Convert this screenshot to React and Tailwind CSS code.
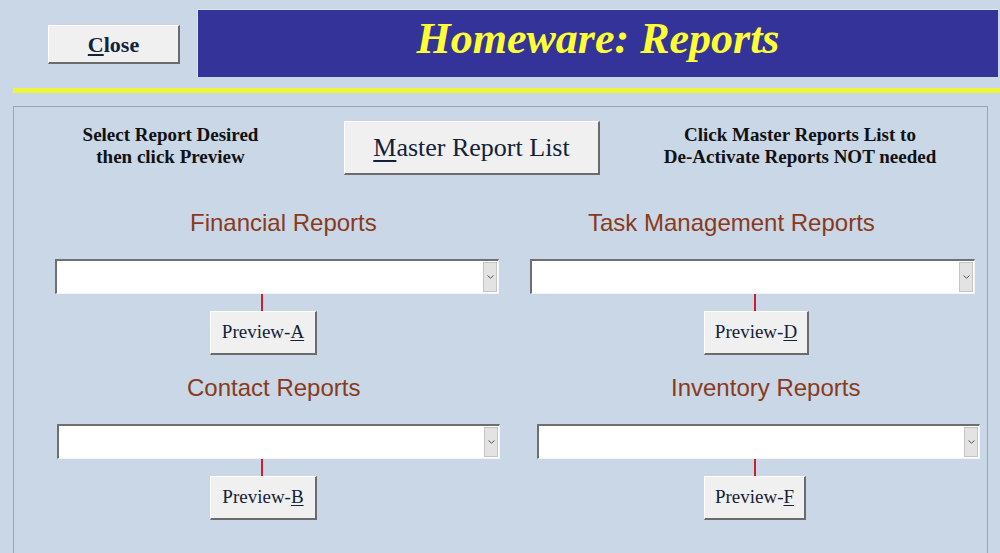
import React from 'react';

const serif = { fontFamily: '"Liberation Serif", "Times New Roman", serif' };
const sans = { fontFamily: '"Liberation Sans", Arial, sans-serif' };

function ComboBox({ left, width }) {
    return (
        <div
            className="h-[35px] flex bg-white border-t-2 border-l-2 border-t-[#6f6f6f] border-l-[#6f6f6f] border-b border-r border-b-[#f4f4f4] border-r-[#f4f4f4]"
            style={{ marginLeft: left, width }}
        >
            <div className="flex-1" />
            <div className="w-[14px] my-[1px] mr-[1px] bg-[#e3e3e3] border border-[#c4c4c4] flex items-center justify-center">
                <svg width="7" height="4" viewBox="0 0 7 4">
                    <path d="M0.5 0.5 L3.5 3.2 L6.5 0.5" fill="none" stroke="#555" strokeWidth="1" />
                </svg>
            </div>
        </div>
    );
}

function WinButton({ children, className = '' }) {
    return (
        <button
            className={`bg-[#f0f0f0] border-t border-l border-t-white border-l-white border-b-2 border-r-2 border-b-[#6b6b6b] border-r-[#6b6b6b] text-[#14213a] flex items-center justify-center ${className}`}
            style={serif}
        >
            {children}
        </button>
    );
}

// one report group: heading, combo, red connector, preview button
function Section({ title, titleLeft, comboLeft, comboWidth, lineLeft, btnLeft, btnWidth, letter }) {
    return (
        <div className="flex flex-col items-start">
            <div className="text-[24px] leading-[28px] text-[#8a3a1c] whitespace-nowrap" style={{ ...sans, marginLeft: titleLeft }}>
                {title}
            </div>
            <div className="mt-[22px]">
                <ComboBox left={comboLeft} width={comboWidth} />
            </div>
            <div className="w-[2px] h-[17px] bg-[#c8202c]" style={{ marginLeft: lineLeft }} />
            <div style={{ marginLeft: btnLeft }}>
                <WinButton className="h-[44px] text-[19px]">
                    <span className="whitespace-nowrap text-center" style={{ width: btnWidth - 3 }}>
                        Preview-<span className="underline underline-offset-2">{letter}</span>
                    </span>
                </WinButton>
            </div>
        </div>
    );
}

export default function App() {
    return (
        <div className="w-[1000px] h-[553px] overflow-hidden bg-[#c9d7e6] pt-[9px]">
            {/* header */}
            <div className="flex items-start">
                <WinButton className="ml-[48px] mt-[16px] w-[132px] h-[39px] text-[22px] font-bold">
                    <span><span className="underline underline-offset-2">C</span>lose</span>
                </WinButton>
                <div className="ml-[17px] w-[801px] h-[68px] bg-[#333399] border-t border-l border-[#dfe6ef] flex justify-center pt-[7px]">
                    <span className="text-[44px] leading-none font-bold italic text-[#ffff33] whitespace-nowrap" style={serif}>
                        Homeware: Reports
                    </span>
                </div>
            </div>

            <div className="mt-[11px] ml-[13px] h-[5px] bg-[#eff53c]" />

            {/* panel */}
            <div className="mt-[13px] ml-[13px] w-[975px] h-[460px] border-t border-l border-r border-[#9ba6b2] pt-[14px]">
                <div className="flex items-start">
                    <div className="w-[313px] pt-[3px] text-center text-[19px] leading-[22px] font-bold text-[#111]" style={serif}>
                        <div>Select Report Desired</div>
                        <div>then click Preview</div>
                    </div>
                    <WinButton className="ml-[17px] w-[256px] h-[54px] text-[26px]">
                        <span><span className="underline underline-offset-4">M</span>aster Report List</span>
                    </WinButton>
                    <div className="ml-[20px] w-[360px] pt-[3px] text-center text-[19px] leading-[22px] font-bold text-[#111]" style={serif}>
                        <div>Click Master Reports List to</div>
                        <div>De-Activate Reports NOT needed</div>
                    </div>
                </div>

                <div className="mt-[34px] flex">
                    <div className="w-[500px]">
                        <Section title="Financial Reports" titleLeft={176} comboLeft={41} comboWidth={444} lineLeft={247} btnLeft={196} btnWidth={107} letter="A" />
                    </div>
                    <div className="w-[470px]">
                        <Section title="Task Management Reports" titleLeft={74} comboLeft={16} comboWidth={445} lineLeft={240} btnLeft={190} btnWidth={105} letter="D" />
                    </div>
                </div>

                <div className="mt-[19px] flex">
                    <div className="w-[500px]">
                        <Section title="Contact Reports" titleLeft={173} comboLeft={43} comboWidth={443} lineLeft={247} btnLeft={196} btnWidth={107} letter="B" />
                    </div>
                    <div className="w-[470px]">
                        <Section title="Inventory Reports" titleLeft={157} comboLeft={23} comboWidth={443} lineLeft={240} btnLeft={190} btnWidth={102} letter="F" />
                    </div>
                </div>
            </div>
        </div>
    );
}
